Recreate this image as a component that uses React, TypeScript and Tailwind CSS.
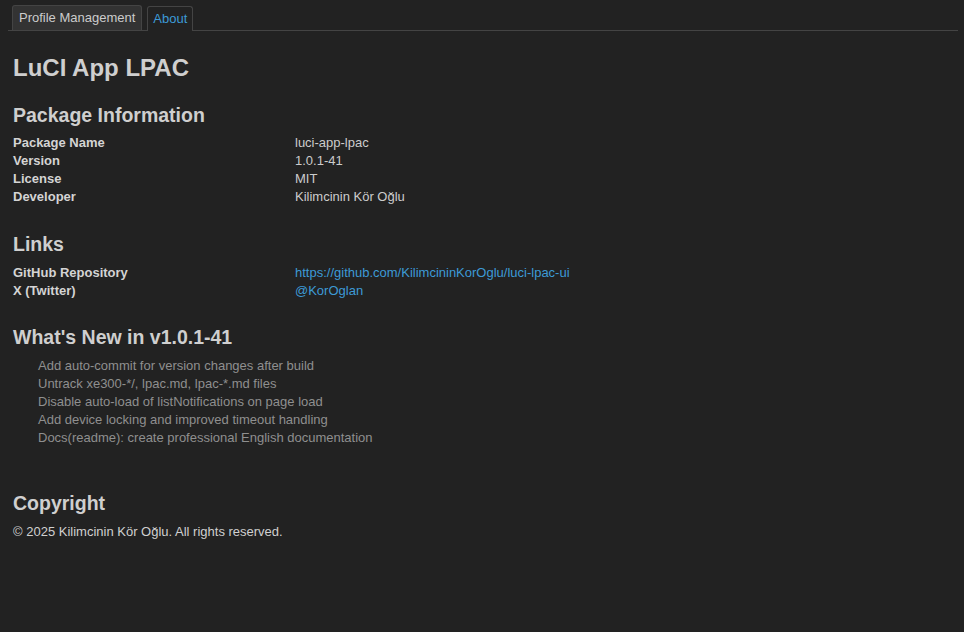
const font = { fontFamily: '"Liberation Sans", Arial, sans-serif' };

const packageInfo = [
  { label: "Package Name", value: "luci-app-lpac" },
  { label: "Version", value: "1.0.1-41" },
  { label: "License", value: "MIT" },
  { label: "Developer", value: "Kilimcinin Kör Oğlu" },
];

const links = [
  { label: "GitHub Repository", value: "https://github.com/KilimcininKorOglu/luci-lpac-ui" },
  { label: "X (Twitter)", value: "@KorOglan" },
];

const changes = [
  "Add auto-commit for version changes after build",
  "Untrack xe300-*/, lpac.md, lpac-*.md files",
  "Disable auto-load of listNotifications on page load",
  "Add device locking and improved timeout handling",
  "Docs(readme): create professional English documentation",
];

const Row = ({ label, children }: { label: string; children: React.ReactNode }) => (
  <div className="flex h-[18px] items-center text-[13px]">
    <div className="w-[282px] font-bold text-[#d4d4d4]">{label}</div>
    <div>{children}</div>
  </div>
);

export default function App() {
  return (
    <div className="min-h-screen w-full bg-[#222222] text-[#cccccc]" style={font}>
      <div className="ml-2 mr-[6px] pt-[6px] flex items-end gap-[5px] border-b border-[#444444] pl-1 h-[31px]">
        <div className="h-[25px] px-[6px] flex items-center rounded-t-[3px] border border-b-0 border-[#444444] bg-[#333333] text-[13px] text-[#cccccc]">
          Profile Management
        </div>
        <div className="h-[25px] -mb-px px-[5px] flex items-center rounded-t-[3px] border border-b-0 border-[#444444] bg-[#222222] text-[13px] text-[#3d9ad6]">
          About
        </div>
      </div>

      <div className="px-[13px]">
        <h1 className="mt-[23px] text-[24px] leading-[28px] font-bold text-[#cfcfcf]">LuCI App LPAC</h1>

        <h2 className="mt-[21px] text-[19.5px] leading-[24px] font-bold text-[#cfcfcf]">Package Information</h2>
        <div className="mt-[7px]">
          {packageInfo.map((r) => (
            <Row key={r.label} label={r.label}>
              <span className="text-[#cccccc]">{r.value}</span>
            </Row>
          ))}
        </div>

        <h2 className="mt-[26px] text-[19.5px] leading-[24px] font-bold text-[#cfcfcf]">Links</h2>
        <div className="mt-[8px]">
          {links.map((r) => (
            <Row key={r.label} label={r.label}>
              <a className="text-[#3d9ad6]">{r.value}</a>
            </Row>
          ))}
        </div>

        <h2 className="mt-[25px] text-[19.5px] leading-[24px] font-bold text-[#cfcfcf]">What's New in v1.0.1-41</h2>
        <ul className="mt-[8px] pl-[25px]">
          {changes.map((c) => (
            <li key={c} className="h-[18px] flex items-center text-[13px] text-[#8f8f8f]">
              {c}
            </li>
          ))}
        </ul>

        <h2 className="mt-[44px] text-[19.5px] leading-[24px] font-bold text-[#cfcfcf]">Copyright</h2>
        <p className="mt-[8px] h-[18px] flex items-center text-[13px] text-[#d0d0d0]">
          © 2025 Kilimcinin Kör Oğlu. All rights reserved.
        </p>
      </div>
    </div>
  );
}
